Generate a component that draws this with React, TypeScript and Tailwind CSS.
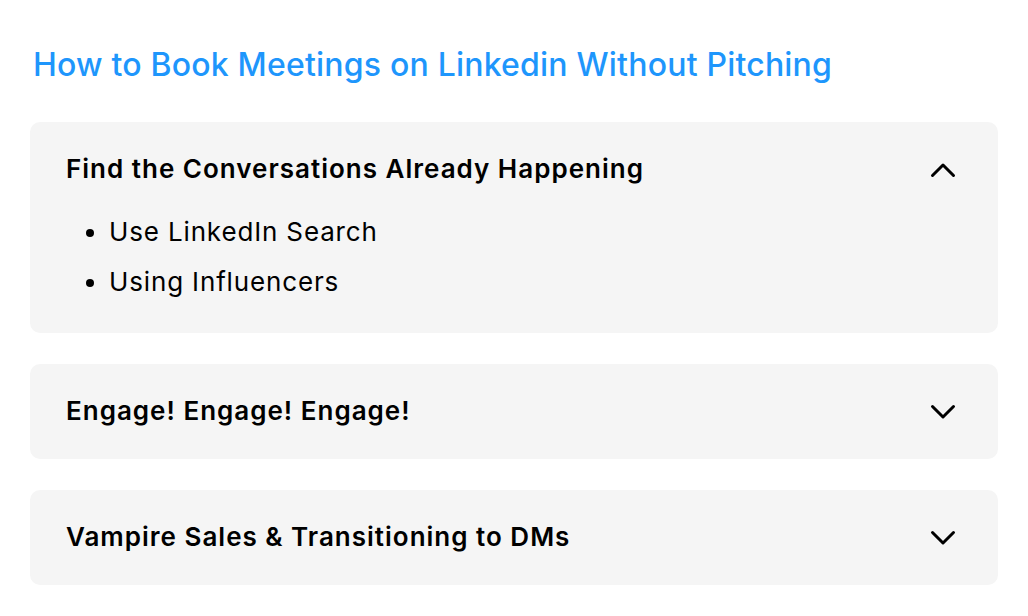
import React, { useState } from "react";

const SECTIONS = [
  {
    title: "Find the Conversations Already Happening",
    items: ["Use LinkedIn Search", "Using Influencers"],
  },
  { title: "Engage! Engage! Engage!", items: ["Comment on posts", "Share insights"] },
  { title: "Vampire Sales & Transitioning to DMs", items: ["Start the conversation", "Move to DMs"] },
];

function Chevron({ up }: { up: boolean }) {
  return (
    <svg width="26" height="16" viewBox="0 0 26 16" fill="none" className="shrink-0">
      <polyline
        points={up ? "2.5,13.5 13,3 23.5,13.5" : "2.5,2.5 13,13 23.5,2.5"}
        stroke="#000"
        strokeWidth="3"
        strokeLinecap="round"
        strokeLinejoin="round"
      />
    </svg>
  );
}

export default function App() {
  const [open, setOpen] = useState(0);

  return (
    <div className="min-h-screen bg-white px-[30px] pt-[44px] font-['Inter',sans-serif] text-black">
      <h1 className="pl-[3px] text-[32px] leading-[42px] font-medium tracking-[0.2px] text-[#1e96fc]">
        How to Book Meetings on Linkedin Without Pitching
      </h1>

      <div className="mt-[36px] flex flex-col gap-[31px]">
        {SECTIONS.map((s, idx) => (
          <div key={idx} className="rounded-[10px] bg-[#f5f5f5] px-[36px]">
            <button
              type="button"
              onClick={() => setOpen(open === idx ? -1 : idx)}
              className="flex w-full items-center justify-between pt-[30px] pb-[32px] text-left"
            >
              <span className="text-[26px] leading-[33px] font-semibold tracking-[1px]">{s.title}</span>
              <span className="mr-[6px] -mb-[2px]">
                <Chevron up={open === idx} />
              </span>
            </button>
            {open === idx && (
              <ul className="-mt-[10px] list-disc pb-[26px] pl-[43px] text-[26px] leading-[50px] tracking-[0.85px]">
                {s.items.map((it, i) => (
                  <li key={i}>{it}</li>
                ))}
              </ul>
            )}
          </div>
        ))}
      </div>
    </div>
  );
}
